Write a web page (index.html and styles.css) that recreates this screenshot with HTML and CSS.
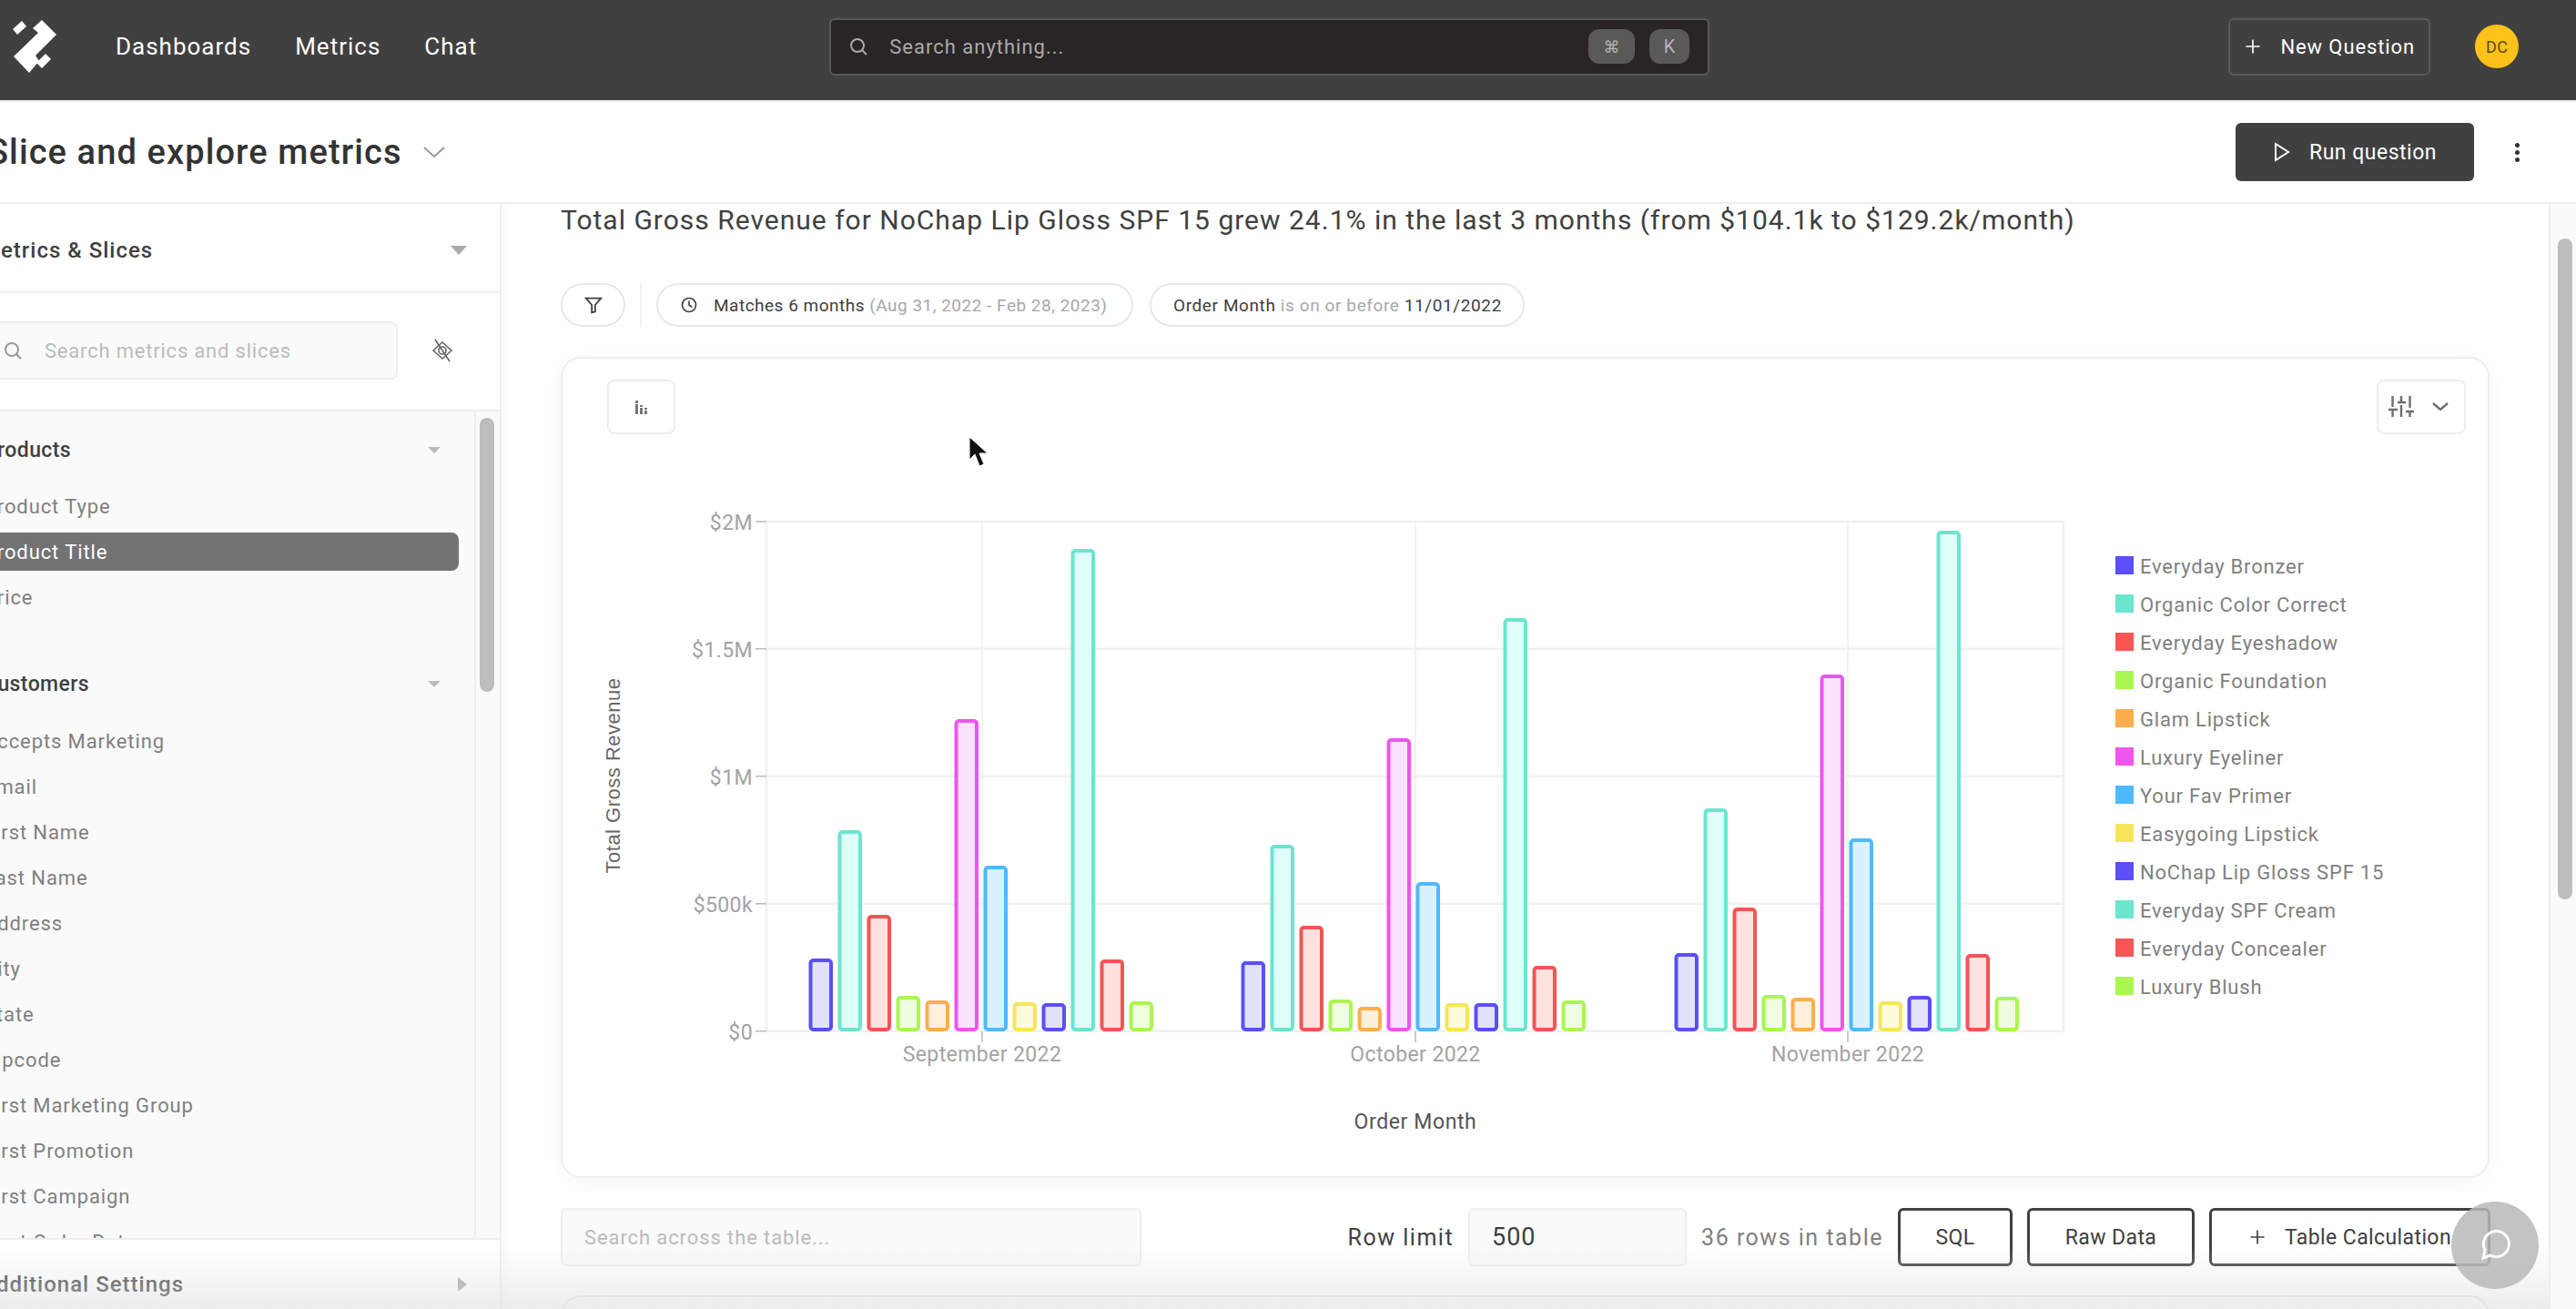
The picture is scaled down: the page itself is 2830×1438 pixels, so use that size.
FILE: index.html
```html
<!DOCTYPE html>
<html lang="en">
<head>
    <meta charset="UTF-8">
    <title>Slice and explore metrics</title>
    <link rel="stylesheet" href="styles.css">
</head>
<body>
    <header class="topbar">
        <svg class="logo" viewBox="12 20 54 62" width="54" height="62">
            <polygon points="14,32 24,23 29,29 19,38" fill="#fff"/>
            <polygon points="46,22 62,38 39,61 43,67 32,80 15,62 42,36 36,31" fill="#fff"/>
            <polygon points="50,59 56,65 46,75 40,69" fill="#fff"/>
        </svg>
        <nav class="nav">
            <a>Dashboards</a>
            <a>Metrics</a>
            <a>Chat</a>
        </nav>
        <div class="global-search">
            <svg class="icon" viewBox="0 0 24 24" width="24" height="24"><circle cx="11" cy="11" r="7"/><path d="M16 16l5 5"/></svg>
            <span class="global-search-text">Search anything...</span>
            <kbd class="key key-cmd">⌘</kbd>
            <kbd class="key key-k">K</kbd>
        </div>
        <button class="new-question">
            <svg class="icon" viewBox="0 0 24 24" width="20" height="20"><path d="M12 3v18M3 12h18"/></svg>
            New Question
        </button>
        <div class="avatar">DC</div>
    </header>

    <div class="pagehead">
        <h1 class="page-title">Slice and explore metrics</h1>
        <svg class="icon page-chevron" viewBox="0 0 26 14" width="26" height="14"><path d="M2 2l11 10L24 2"/></svg>
        <button class="run-question">
            <svg class="icon" viewBox="0 0 20 24" width="20" height="24"><path d="M3 3l14 9-14 9z"/></svg>
            Run question
        </button>
        <div class="kebab"><i></i><i></i><i></i></div>
    </div>

    <div class="workspace">
        <aside class="sidebar">
            <div class="side-head">
                <span class="side-title">Metrics &amp; Slices</span>
                <span class="tri-down"></span>
            </div>
            <div class="side-search">
                <div class="side-input">
                    <svg class="icon" viewBox="0 0 24 24" width="24" height="24"><circle cx="11" cy="11" r="7"/><path d="M16 16l5 5"/></svg>
                    <span>Search metrics and slices</span>
                </div>
                <svg class="icon eye-off" viewBox="0 0 26 26" width="26" height="26"><path d="M13 4l10 9-10 9-10-9z"/><circle cx="13" cy="13" r="4"/><path d="M5 1l16 24"/></svg>
            </div>
            <div class="side-list-wrap">
                <div class="side-list">
                    <div class="group-head"><span class="side-label">Products</span><span class="tri-down tri-small"></span></div>
                    <div class="item"><span class="side-label">Product Type</span></div>
                    <div class="item item-active"><span class="side-label">Product Title</span></div>
                    <div class="item"><span class="side-label">Price</span></div>
                    <div class="group-head group-next"><span class="side-label">Customers</span><span class="tri-down tri-small"></span></div>
                    <div class="item"><span class="side-label">Accepts Marketing</span></div>
                    <div class="item"><span class="side-label">Email</span></div>
                    <div class="item"><span class="side-label">First Name</span></div>
                    <div class="item"><span class="side-label">Last Name</span></div>
                    <div class="item"><span class="side-label">Address</span></div>
                    <div class="item"><span class="side-label">City</span></div>
                    <div class="item"><span class="side-label">State</span></div>
                    <div class="item"><span class="side-label">Zipcode</span></div>
                    <div class="item"><span class="side-label">First Marketing Group</span></div>
                    <div class="item"><span class="side-label">First Promotion</span></div>
                    <div class="item"><span class="side-label">First Campaign</span></div>
                    <div class="item"><span class="side-label">First Order Date</span></div>
                </div>
                <div class="side-scroll"><div class="side-thumb"></div></div>
            </div>
            <div class="side-foot">
                <span class="side-title">Additional Settings</span>
                <span class="tri-right"></span>
            </div>
        </aside>

        <main class="main">
            <h2 class="headline">Total Gross Revenue for NoChap Lip Gloss SPF 15 grew 24.1% in the last 3 months (from $104.1k to $129.2k/month)</h2>

            <div class="filters">
                <div class="pill pill-filter">
                    <svg class="icon" viewBox="0 0 24 24" width="22" height="22"><path d="M3 4h18l-7 8v8l-4 1v-9z"/></svg>
                </div>
                <div class="filter-sep"></div>
                <div class="pill pill-date">
                    <svg class="icon" viewBox="0 0 24 24" width="20" height="20"><circle cx="12" cy="12" r="9"/><path d="M12 6.5V12l4 3"/></svg>
                    <span>Matches 6 months <em>(Aug 31, 2022 - Feb 28, 2023)</em></span>
                </div>
                <div class="pill pill-order">
                    <span>Order Month <em>is on or before</em> 11/01/2022</span>
                </div>
            </div>

            <section class="chart-card">
                <div class="chart-tools">
                    <button class="tool-btn tool-type">
                        <svg viewBox="0 0 14 15" width="14" height="15"><path class="bars-glyph" d="M0 0h3v3H0zM0 4h3v11H0zM5 5h3v2H5zM5 8h3v7H5zM10 8h3v2h-3zM10 11h3v4h-3z"/></svg>
                    </button>
                    <button class="tool-btn tool-settings">
                        <svg class="icon icon-grey" viewBox="0 0 28 24" width="28" height="24"><path d="M4.5 0v12M0 15h10M4.5 15v8M14 0v7M10 7h9M14 10v13M23.5 0v13M19 17h9M23.5 18v5"/></svg>
                        <svg class="icon icon-grey" viewBox="0 0 18 10" width="18" height="10"><path d="M1 1l8 7 8-7"/></svg>
                    </button>
                </div>

                <svg class="chart" viewBox="618 490 2115 802" width="2115" height="802">
                    <g class="grid">
                        <path d="M842 573H2267M842 712.7H2267M842 852.7H2267M842 992.7H2267M842 1132.7H2267"/>
                        <path d="M842 573V1132.7M2267 573V1132.7"/>
                    </g>
                    <g class="grid-thin">
                        <path d="M1079 573V1132.7M1555 573V1132.7M2030 573V1132.7"/>
                    </g>
                    <g class="ticks">
                        <path d="M830 573h12M830 712.7h12M830 852.7h12M830 992.7h12M830 1132.7h12"/>
                        <path d="M1079 1133v12M1555 1133v12M2030 1133v12"/>
                    </g>
                    <g class="axis-labels">
                        <text x="827" y="582" text-anchor="end">$2M</text>
                        <text x="827" y="722" text-anchor="end">$1.5M</text>
                        <text x="827" y="862" text-anchor="end">$1M</text>
                        <text x="827" y="1002" text-anchor="end">$500k</text>
                        <text x="827" y="1142" text-anchor="end">$0</text>
                        <text x="1079" y="1166" text-anchor="middle">September 2022</text>
                        <text x="1555" y="1166" text-anchor="middle">October 2022</text>
                        <text x="2030" y="1166" text-anchor="middle">November 2022</text>
                    </g>
                    <text class="axis-title-x" x="1555" y="1240" text-anchor="middle">Order Month</text>
                    <text class="axis-title-y" transform="translate(681 852) rotate(-90)" text-anchor="middle">Total Gross Revenue</text>

                    <g class="bars" transform="translate(.5 -1)">
                        <!-- September -->
                        <rect class="s1" x="890" y="1056" width="22.5" height="76" rx="3"/>
                        <rect class="s2" x="922" y="915" width="22.5" height="217" rx="3"/>
                        <rect class="s3" x="954" y="1008" width="22.5" height="124" rx="3"/>
                        <rect class="s4" x="986" y="1097" width="22.5" height="35" rx="3"/>
                        <rect class="s5" x="1018" y="1102" width="22.5" height="30" rx="3"/>
                        <rect class="s6" x="1050" y="793" width="22.5" height="339" rx="3"/>
                        <rect class="s7" x="1082" y="954" width="22.5" height="178" rx="3"/>
                        <rect class="s8" x="1114" y="1104" width="22.5" height="28" rx="3"/>
                        <rect class="s1" x="1146" y="1105" width="22.5" height="27" rx="3"/>
                        <rect class="s2" x="1178" y="606" width="22.5" height="526" rx="3"/>
                        <rect class="s3" x="1210" y="1057" width="22.5" height="75" rx="3"/>
                        <rect class="s4" x="1242" y="1103" width="22.5" height="29" rx="3"/>
                        <!-- October -->
                        <rect class="s1" x="1365" y="1059" width="22.5" height="73" rx="3"/>
                        <rect class="s2" x="1397" y="931" width="22.5" height="201" rx="3"/>
                        <rect class="s3" x="1429" y="1020" width="22.5" height="112" rx="3"/>
                        <rect class="s4" x="1461" y="1101" width="22.5" height="31" rx="3"/>
                        <rect class="s5" x="1493" y="1109" width="22.5" height="23" rx="3"/>
                        <rect class="s6" x="1525" y="814" width="22.5" height="318" rx="3"/>
                        <rect class="s7" x="1557" y="972" width="22.5" height="160" rx="3"/>
                        <rect class="s8" x="1589" y="1105" width="22.5" height="27" rx="3"/>
                        <rect class="s1" x="1621" y="1105" width="22.5" height="27" rx="3"/>
                        <rect class="s2" x="1653" y="682" width="22.5" height="450" rx="3"/>
                        <rect class="s3" x="1685" y="1064" width="22.5" height="68" rx="3"/>
                        <rect class="s4" x="1717" y="1102" width="22.5" height="30" rx="3"/>
                        <!-- November -->
                        <rect class="s1" x="1841" y="1050" width="22.5" height="82" rx="3"/>
                        <rect class="s2" x="1873" y="891" width="22.5" height="241" rx="3"/>
                        <rect class="s3" x="1905" y="1000" width="22.5" height="132" rx="3"/>
                        <rect class="s4" x="1937" y="1096" width="22.5" height="36" rx="3"/>
                        <rect class="s5" x="1969" y="1099" width="22.5" height="33" rx="3"/>
                        <rect class="s6" x="2001" y="744" width="22.5" height="388" rx="3"/>
                        <rect class="s7" x="2033" y="924" width="22.5" height="208" rx="3"/>
                        <rect class="s8" x="2065" y="1103" width="22.5" height="29" rx="3"/>
                        <rect class="s1" x="2097" y="1097" width="22.5" height="35" rx="3"/>
                        <rect class="s2" x="2129" y="586" width="22.5" height="546" rx="3"/>
                        <rect class="s3" x="2161" y="1051" width="22.5" height="81" rx="3"/>
                        <rect class="s4" x="2193" y="1098" width="22.5" height="34" rx="3"/>
                    </g>

                    <g class="legend">
                        <rect class="k1" x="2324" y="611" width="20" height="20"/><text x="2351" y="630">Everyday Bronzer</text>
                        <rect class="k2" x="2324" y="653" width="20" height="20"/><text x="2351" y="672">Organic Color Correct</text>
                        <rect class="k3" x="2324" y="695" width="20" height="20"/><text x="2351" y="714">Everyday Eyeshadow</text>
                        <rect class="k4" x="2324" y="737" width="20" height="20"/><text x="2351" y="756">Organic Foundation</text>
                        <rect class="k5" x="2324" y="779" width="20" height="20"/><text x="2351" y="798">Glam Lipstick</text>
                        <rect class="k6" x="2324" y="821" width="20" height="20"/><text x="2351" y="840">Luxury Eyeliner</text>
                        <rect class="k7" x="2324" y="863" width="20" height="20"/><text x="2351" y="882">Your Fav Primer</text>
                        <rect class="k8" x="2324" y="905" width="20" height="20"/><text x="2351" y="924">Easygoing Lipstick</text>
                        <rect class="k1" x="2324" y="947" width="20" height="20"/><text x="2351" y="966">NoChap Lip Gloss SPF 15</text>
                        <rect class="k2" x="2324" y="989" width="20" height="20"/><text x="2351" y="1008">Everyday SPF Cream</text>
                        <rect class="k3" x="2324" y="1031" width="20" height="20"/><text x="2351" y="1050">Everyday Concealer</text>
                        <rect class="k4" x="2324" y="1073" width="20" height="20"/><text x="2351" y="1092">Luxury Blush</text>
                    </g>
                </svg>
            </section>

            <div class="table-bar">
                <div class="table-search">Search across the table...</div>
                <span class="row-limit-label">Row limit</span>
                <div class="row-limit">500</div>
                <span class="row-count">36 rows in table</span>
                <button class="outline-btn btn-sql">SQL</button>
                <button class="outline-btn btn-raw">Raw Data</button>
                <button class="outline-btn btn-calc">
                    <svg class="icon" viewBox="0 0 24 24" width="20" height="20"><path d="M12 3v18M3 12h18"/></svg>
                    Table Calculation
                </button>
            </div>

            <div class="table-card"></div>
        </main>

        <div class="page-scroll"><div class="page-thumb"></div></div>
    </div>

    <div class="bottom-fade"></div>

    <div class="chat-bubble">
        <svg viewBox="0 0 36 36" width="36" height="36"><path d="M5 32l2-9a14 14 0 1 1 6 6z"/></svg>
    </div>

    <svg class="cursor" viewBox="0 0 24 38" width="24" height="38"><path d="M1 1v25l6-6 5 13 5-2-5-12h9z"/></svg>
</body>
</html>
```

FILE: styles.css
```css
* {
    box-sizing: border-box;
}
html, body {
    margin: 0;
    height: 100%;
}
body {
    position: relative;
    width: 2830px;
    height: 1438px;
    overflow: hidden;
    font-family: Roboto, Arial, sans-serif;
    color: #404040;
    background-color: #fff;
    letter-spacing: .4px;
}
button {
    font: inherit;
    letter-spacing: inherit;
    cursor: pointer;
}
.icon {
    fill: none;
    stroke: currentColor;
    stroke-width: 2;
    flex: none;
}

/* top bar */
.topbar {
    height: 112px;
    padding-bottom: 8px;
    display: flex;
    align-items: center;
    background-color: #404040;
    border-bottom: 2px solid #eee;
    color: #fff;
}
.logo {
    margin-left: 12px;
}
.nav {
    display: flex;
    gap: 48px;
    margin-left: 61px;
    font-size: 26px;
    letter-spacing: 1px;
}
.global-search {
    width: 967px;
    height: 63px;
    margin-left: 387px;
    padding: 0 20px 0 18px;
    display: flex;
    align-items: center;
    background-color: #292526;
    border: 2px solid #5a5a5a;
    border-radius: 6px;
    color: #aaa;
}
.global-search-text {
    margin-left: 22px;
    font-size: 22px;
    letter-spacing: 1px;
    flex: 1;
}
.key {
    height: 38px;
    display: flex;
    align-items: center;
    justify-content: center;
    background-color: #595959;
    border-radius: 12px;
    color: #b5b5b5;
    font-family: "DejaVu Sans", sans-serif;
    font-size: 18px;
}
.key-cmd {
    width: 51px;
}
.key-k {
    width: 44px;
    margin-left: 16px;
    font-family: Roboto, sans-serif;
    font-size: 20px;
}
.new-question {
    width: 222px;
    height: 63px;
    margin-left: 570px;
    display: flex;
    align-items: center;
    justify-content: center;
    gap: 20px;
    background: transparent;
    border: 2px solid #5a5a5a;
    border-radius: 6px;
    color: #fff;
    font-size: 22px;
    letter-spacing: .9px;
}
.avatar {
    width: 48px;
    height: 48px;
    margin-left: 49px;
    display: flex;
    align-items: center;
    justify-content: center;
    background-color: #fec21a;
    border-radius: 50%;
    color: #5c4a14;
    font-size: 18px;
}

/* page header */
.pagehead {
    height: 112px;
    display: flex;
    align-items: center;
    border-bottom: 2px solid #eee;
    overflow: hidden;
}
.page-title {
    margin: 0 0 0 -14px;
    font-size: 38px;
    font-weight: 500;
    letter-spacing: 1.1px;
    color: #333;
    white-space: nowrap;
}
.page-chevron {
    margin-left: 22px;
    color: #999;
}
.run-question {
    width: 262px;
    height: 64px;
    margin-left: auto;
    display: flex;
    align-items: center;
    justify-content: center;
    gap: 20px;
    background-color: #404040;
    border: 0;
    border-radius: 6px;
    color: #fff;
    font-size: 23px;
    letter-spacing: .5px;
}
.kebab {
    width: 5px;
    margin: 0 62px 0 45px;
    display: flex;
    flex-direction: column;
    gap: 3px;
}
.kebab i {
    height: 5px;
    background-color: #333;
    border-radius: 50%;
}

/* sidebar */
.workspace {
    height: 1214px;
    display: flex;
}
.sidebar {
    width: 551px;
    flex: none;
    display: flex;
    flex-direction: column;
    border-right: 2px solid #eee;
    overflow: hidden;
}
.side-head {
    height: 98px;
    padding-top: 6px;
    display: flex;
    align-items: center;
    border-bottom: 2px solid #eee;
}
.side-title {
    margin-left: -21px;
    font-size: 24px;
    font-weight: 500;
    letter-spacing: 1px;
    white-space: nowrap;
    flex: 1;
}
.tri-down {
    width: 0;
    height: 0;
    margin-right: 36px;
    border-left: 9px solid transparent;
    border-right: 9px solid transparent;
    border-top: 10px solid #aaa;
}
.tri-small {
    margin-right: 20px;
    border-left-width: 7px;
    border-right-width: 7px;
    border-top: 7px solid #bbb;
}
.tri-right {
    width: 0;
    height: 0;
    margin-right: 36px;
    border-top: 8px solid transparent;
    border-bottom: 8px solid transparent;
    border-left: 10px solid #aaa;
}
.side-search {
    height: 130px;
    padding-bottom: 2px;
    display: flex;
    align-items: center;
    border-bottom: 2px solid #eee;
}
.side-input {
    width: 437px;
    height: 64px;
    padding-left: 2px;
    display: flex;
    align-items: center;
    gap: 23px;
    background-color: #fafafa;
    border: 2px solid #eee;
    border-left: 0;
    border-radius: 0 8px 8px 0;
    color: #999;
    font-size: 22px;
    letter-spacing: .8px;
}
.side-input span {
    color: #bbb;
}
.eye-off {
    margin-left: 36px;
    color: #666;
    stroke-width: 1.6;
}
.side-list-wrap {
    height: 908px;
    display: flex;
    background-color: #fafafa;
    overflow: hidden;
}
.side-list {
    width: 523px;
    flex: none;
    padding: 17px 17px 0 0;
    border-right: 2px solid #eee;
    overflow: hidden;
}
.group-head {
    height: 50px;
    margin-bottom: 16px;
    display: flex;
    align-items: center;
    justify-content: space-between;
    font-size: 23px;
    font-weight: 500;
}
.group-next {
    margin-top: 49px;
    margin-bottom: 17px;
}
.item {
    height: 42px;
    margin-bottom: 8px;
    display: flex;
    align-items: center;
    font-size: 22px;
    letter-spacing: .9px;
    color: #808080;
}
.item-active {
    background-color: #737373;
    border-radius: 0 8px 8px 0;
    color: #fff;
}
.side-label {
    margin-left: -18px;
    white-space: nowrap;
}
.side-scroll {
    flex: 1;
    padding: 7px 4px;
}
.side-thumb {
    width: 16px;
    height: 301px;
    background-color: #bdbdbd;
    border-radius: 8px;
}
.side-foot {
    height: 78px;
    padding-top: 22px;
    display: flex;
    align-items: center;
    border-top: 2px solid #eee;
}

/* main column */
.main {
    width: 2249px;
    flex: none;
    padding: 0 64px 0 65px;
    overflow: hidden;
    box-shadow: inset 12px 0 14px -12px rgba(0, 0, 0, .04);
}
.headline {
    height: 36px;
    margin: 0 0 51px;
    font-size: 30px;
    line-height: 36px;
    font-weight: 400;
    letter-spacing: 1px;
    white-space: nowrap;
}
.filters {
    height: 48px;
    margin-bottom: 33px;
    display: flex;
    align-items: center;
}
.pill {
    height: 48px;
    display: flex;
    align-items: center;
    border: 2px solid #e8e8e8;
    border-radius: 24px;
    font-size: 19px;
    letter-spacing: .5px;
    white-space: nowrap;
}
.pill em {
    font-style: normal;
    color: #a8a8a8;
}
.pill-filter {
    width: 71px;
    justify-content: center;
}
.filter-sep {
    width: 2px;
    height: 48px;
    margin: 0 16px;
    background-color: #f2f2f2;
}
.pill-date {
    width: 524px;
    padding-left: 24px;
    gap: 17px;
}
.pill-order {
    width: 412px;
    margin-left: 18px;
    padding-left: 24px;
    letter-spacing: .6px;
}

/* chart card */
.chart-card {
    width: 2119px;
    height: 902px;
    margin-bottom: 33px;
    background-color: #fff;
    border: 2px solid #eee;
    border-radius: 22px;
    box-shadow: 0 4px 30px rgba(0, 0, 0, .04);
}
.chart-tools {
    height: 96px;
    padding: 23px 24px 0 49px;
    display: flex;
    justify-content: space-between;
    align-items: flex-start;
}
.tool-btn {
    height: 60px;
    display: flex;
    align-items: center;
    justify-content: center;
    background-color: #fff;
    border: 2px solid #eee;
    border-radius: 8px;
}
.tool-type {
    width: 75px;
}
.tool-settings {
    width: 98px;
    padding: 0 0 0 11px;
    justify-content: flex-start;
    gap: 20px;
}
.tool-settings .icon {
    stroke-width: 2.4;
}
.bars-glyph {
    fill: #777;
}
.icon-grey {
    color: #6e6e6e;
}
.chart {
    display: block;
}
.grid path {
    fill: none;
    stroke: #f0f0f0;
    stroke-width: 2.5;
}
.grid-thin path {
    fill: none;
    stroke: #f0f0f0;
    stroke-width: 1.5;
}
.ticks path {
    fill: none;
    stroke: #bbb;
    stroke-width: 1.5;
}
.axis-labels text {
    fill: #a3a3a3;
    font-size: 23px;
}
.axis-title-x {
    fill: #555;
    font-size: 23px;
    letter-spacing: .6px;
}
.axis-title-y {
    fill: #666;
    font-family: "Liberation Sans", Arial, sans-serif;
    font-size: 22px;
    letter-spacing: .5px;
}
.bars rect {
    stroke-width: 4;
}
.s1 { fill: #e3e2fd; stroke: #5a4ff8; }
.s2 { fill: #dffff9; stroke: #6ce5cf; }
.s3 { fill: #ffe1e0; stroke: #f25555; }
.s4 { fill: #f1fde1; stroke: #a9f74f; }
.s5 { fill: #fff0db; stroke: #ffad4f; }
.s6 { fill: #fde3ff; stroke: #ee55ee; }
.s7 { fill: #d8f3ff; stroke: #4fb9ff; }
.s8 { fill: #fdfbdc; stroke: #f7e65a; }
.k1 { fill: #5a4ff8; }
.k2 { fill: #6ce5cf; }
.k3 { fill: #f95555; }
.k4 { fill: #a9f74f; }
.k5 { fill: #ffad4f; }
.k6 { fill: #f055ee; }
.k7 { fill: #4fb9ff; }
.k8 { fill: #f7e65a; }
.legend text {
    fill: #808080;
    font-size: 22px;
    letter-spacing: .8px;
}

/* table toolbar */
.table-bar {
    height: 64px;
    margin-bottom: 32px;
    display: flex;
    align-items: center;
    white-space: nowrap;
}
.table-search {
    width: 638px;
    height: 64px;
    padding-left: 24px;
    display: flex;
    align-items: center;
    background-color: #fafafa;
    border: 2px solid #eee;
    border-radius: 6px;
    color: #bbb;
    font-size: 22px;
    letter-spacing: .9px;
}
.row-limit-label {
    margin-left: auto;
    font-size: 25px;
    letter-spacing: 1.5px;
}
.row-limit {
    width: 240px;
    height: 64px;
    margin-left: 16px;
    padding-left: 24px;
    display: flex;
    align-items: center;
    background-color: #fafafa;
    border: 2px solid #eee;
    border-radius: 6px;
    font-size: 27px;
    letter-spacing: .9px;
}
.row-count {
    margin-left: 16px;
    font-size: 25px;
    letter-spacing: 1.5px;
    color: #808080;
}
.outline-btn {
    height: 64px;
    margin-left: 16px;
    display: flex;
    align-items: center;
    justify-content: center;
    gap: 20px;
    background-color: #fff;
    border: 3px solid #404040;
    border-radius: 6px;
    color: #404040;
    font-size: 23px;
}
.btn-sql {
    width: 126px;
}
.btn-raw {
    width: 184px;
}
.btn-calc {
    width: 309px;
}
.table-card {
    width: 2119px;
    height: 60px;
    background-color: #fff;
    border: 2px solid #e4e4e4;
    border-radius: 22px 22px 0 0;
}

/* page scrollbar */
.page-scroll {
    flex: 1;
    padding: 38px 6px 0 8px;
    background-color: #fafafa;
    border-left: 2px solid #eee;
}
.page-thumb {
    width: 16px;
    height: 726px;
    background-color: #bdbdbd;
    border-radius: 8px;
}

/* things on top of the page */
.bottom-fade {
    position: absolute;
    left: 0;
    right: 30px;
    bottom: 0;
    height: 70px;
    background: linear-gradient(rgba(225, 225, 225, 0), rgba(225, 225, 225, .6));
    pointer-events: none;
}
.chat-bubble {
    position: absolute;
    left: 2693px;
    top: 1320px;
    width: 96px;
    height: 96px;
    display: flex;
    align-items: center;
    justify-content: center;
    background-color: rgba(185, 185, 185, .85);
    border-radius: 50%;
}
.chat-bubble path {
    fill: none;
    stroke: #fff;
    stroke-width: 3;
}
.cursor {
    position: absolute;
    left: 1064px;
    top: 479px;
}
.cursor path {
    fill: #111;
    stroke: #fff;
    stroke-width: 1;
}
```
